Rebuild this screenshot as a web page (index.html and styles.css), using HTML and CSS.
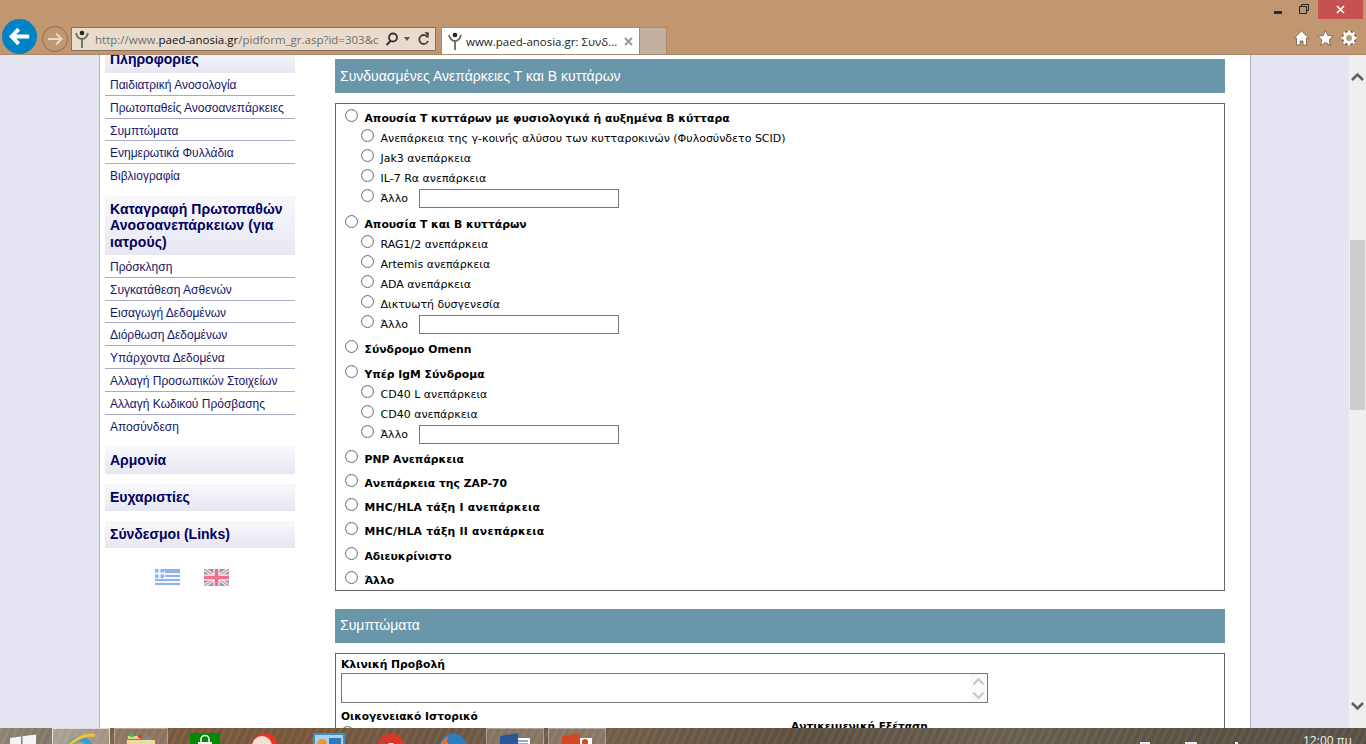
FILE: index.html
```html
<!DOCTYPE html>
<html lang="el">
<head>
<meta charset="utf-8">
<title>www.paed-anosia.gr</title>
<link rel="stylesheet" href="styles.css">
</head>
<body>
<div class="app">
  <header class="chrome">
    <div class="titlebar">
      <span class="wc-min"></span>
      <svg class="wc-restore" width="10" height="10" viewBox="0 0 10 10"><path d="M2.5 2.5V.5h7v6h-2M.5 2.5h7v7h-7z" fill="none" stroke="#222"/></svg>
      <span class="wc-close"><svg width="9" height="9" viewBox="0 0 9 9"><path d="M1 1l7 7M8 1L1 8" stroke="#fff" stroke-width="1.7"/></svg></span>
    </div>
    <div class="toolbar">
      <span class="back"><svg width="22" height="19" viewBox="0 0 25 21"><path d="M11 2L3 10.500 11 19M3.500 10.500H23" fill="none" stroke="#fff" stroke-width="4.500"/></svg></span>
      <span class="forward"><svg width="16" height="14" viewBox="0 0 16 14"><path d="M9 1.500L14.500 7 9 12.500M14 7H1" fill="none" stroke="#e8d8c4" stroke-width="2"/></svg></span>
      <div class="address">
        <svg class="favicon" width="14" height="19" viewBox="0 0 14 19"><circle cx="7" cy="3" r="2.300" fill="#222"/><path d="M1 3c1 4 3 6 6 6s5-2 6-6M7 9v9" fill="none" stroke="#6b6b5c" stroke-width="1.800"/></svg>
        <span class="url">http://www.<b>paed-anosia.gr</b>/pidform_gr.asp?id=303&amp;c</span>
        <svg class="addr-ic" width="14" height="14" viewBox="0 0 14 14"><circle cx="8" cy="5.500" r="4" fill="none" stroke="#333" stroke-width="1.800"/><path d="M5.500 9L1.500 13" stroke="#333" stroke-width="2"/></svg>
        <span class="caret"></span>
        <svg class="addr-ic" width="12" height="14" viewBox="0 0 12 14"><path d="M9.800 5.500A4.500 4.500 0 1 0 10 9" fill="none" stroke="#444" stroke-width="1.800"/><path d="M6.500 0l4.500 .5-.5 5z" fill="#444"/></svg>
      </div>
      <div class="tab">
        <svg class="favicon" width="14" height="19" viewBox="0 0 14 19"><circle cx="7" cy="3" r="2.300" fill="#222"/><path d="M1 3c1 4 3 6 6 6s5-2 6-6M7 9v9" fill="none" stroke="#6b6b5c" stroke-width="1.800"/></svg>
        <span class="tab-title">www.paed-anosia.gr: Συνδ...</span>
        <svg class="tab-x" width="9" height="9" viewBox="0 0 9 9"><path d="M1 1l7 7M8 1L1 8" stroke="#9a9a9a" stroke-width="2"/></svg>
      </div>
      <div class="newtab"></div>
      <div class="tools">
        <svg width="17" height="16" viewBox="0 0 16 16"><path d="M8 1L.8 8H3v7h3.500v-4h3v4H13V8h2.200z" fill="#fff" stroke="#6d5b48" stroke-width=".8"/></svg>
        <svg width="17" height="16" viewBox="0 0 17 16"><path d="M8.500 .5l2.300 5 5.500 .6-4.100 3.700 1.200 5.500-4.900-2.800-4.900 2.800 1.200-5.500L.7 6.100l5.500-.6z" fill="#fff" stroke="#6d5b48" stroke-width=".8"/></svg>
        <svg width="16" height="16" viewBox="0 0 16 16"><circle cx="8" cy="8" r="5.500" fill="none" stroke="#6d5b48" stroke-width="4"/><circle cx="8" cy="8" r="4.500" fill="none" stroke="#fff" stroke-width="3"/><path d="M8 .5v15M.5 8h15M2.700 2.700l10.600 10.600M13.300 2.700L2.700 13.300" stroke="#fff" stroke-width="2.600" stroke-dasharray="3 9"/></svg>
      </div>
    </div>
  </header>

  <div class="viewport">
    <div class="margin-left"></div>
    <div class="page">
      <aside class="sidebar">
        <h3 class="nav-head nav-head-clipped">Πληροφορίες</h3>
        <ul class="nav-list">
          <li>Παιδιατρική Ανοσολογία</li>
          <li>Πρωτοπαθείς Ανοσοανεπάρκειες</li>
          <li>Συμπτώματα</li>
          <li>Ενημερωτικά Φυλλάδια</li>
          <li>Βιβλιογραφία</li>
        </ul>
        <h3 class="nav-head nav-head-reg">Καταγραφή Πρωτοπαθών Ανοσοανεπάρκειων (για ιατρούς)</h3>
        <ul class="nav-list">
          <li>Πρόσκληση</li>
          <li>Συγκατάθεση Ασθενών</li>
          <li>Εισαγωγή Δεδομένων</li>
          <li>Διόρθωση Δεδομένων</li>
          <li>Υπάρχοντα Δεδομένα</li>
          <li>Αλλαγή Προσωπικών Στοιχείων</li>
          <li>Αλλαγή Κωδικού Πρόσβασης</li>
          <li>Αποσύνδεση</li>
        </ul>
        <h3 class="nav-head nav-head-one first-one">Αρμονία</h3>
        <h3 class="nav-head nav-head-one">Ευχαριστίες</h3>
        <h3 class="nav-head nav-head-one">Σύνδεσμοι (Links)</h3>
        <div class="flags">
          <svg width="25" height="17" viewBox="0 0 25 17"><rect width="25" height="17" fill="#f4f7fd"/><path d="M0 1h25M10 3h15M10 7h15M0 11h25M0 15h25" stroke="#8fb2ee" stroke-width="2"/><rect width="9" height="9" fill="#8fb2ee"/><path d="M4.500 0v9M0 4.500h9" stroke="#f4f7fd" stroke-width="2"/></svg>
          <svg width="25" height="17" viewBox="0 0 25 17"><rect width="25" height="17" fill="#8b9dbd"/><path d="M0 0l25 17M25 0L0 17" stroke="#f5f5f8" stroke-width="3.500"/><path d="M0 0l25 17M25 0L0 17" stroke="#f0788f" stroke-width="1.200"/><path d="M12.500 0v17M0 8.500h25" stroke="#f5f5f8" stroke-width="6"/><path d="M12.500 0v17M0 8.500h25" stroke="#f0708a" stroke-width="3.600"/></svg>
        </div>
      </aside>
      <main class="content">
        <h2 class="section-head">Συνδυασμένες Ανεπάρκειες Τ και Β κυττάρων</h2>
        <div class="box options">
          <label class="row top first"><span class="radio"></span>Απουσία Τ κυττάρων με φυσιολογικά ή αυξημένα Β κύτταρα</label>
          <label class="row sub"><span class="radio"></span>Ανεπάρκεια της γ-κοινής αλύσου των κυτταροκινών (Φυλοσύνδετο SCID)</label>
          <label class="row sub"><span class="radio"></span>Jak3 ανεπάρκεια</label>
          <label class="row sub"><span class="radio"></span>IL-7 Rα ανεπάρκεια</label>
          <label class="row sub"><span class="radio"></span><span class="other">Άλλο</span><span class="field"></span></label>
          <label class="row top mt6"><span class="radio"></span>Απουσία Τ και Β κυττάρων</label>
          <label class="row sub"><span class="radio"></span>RAG1/2 ανεπάρκεια</label>
          <label class="row sub"><span class="radio"></span>Artemis ανεπάρκεια</label>
          <label class="row sub"><span class="radio"></span>ADA ανεπάρκεια</label>
          <label class="row sub"><span class="radio"></span>Δικτυωτή δυσγενεσία</label>
          <label class="row sub"><span class="radio"></span><span class="other">Άλλο</span><span class="field"></span></label>
          <label class="row top mt5"><span class="radio"></span>Σύνδρομο Omenn</label>
          <label class="row top mt5"><span class="radio"></span>Υπέρ IgM Σύνδρομα</label>
          <label class="row sub"><span class="radio"></span>CD40 L ανεπάρκεια</label>
          <label class="row sub"><span class="radio"></span>CD40 ανεπάρκεια</label>
          <label class="row sub"><span class="radio"></span><span class="other">Άλλο</span><span class="field"></span></label>
          <label class="row top mt5"><span class="radio"></span>PNP Ανεπάρκεια</label>
          <label class="row top"><span class="radio"></span>Ανεπάρκεια της ZAP-70</label>
          <label class="row top wide"><span class="radio"></span>MHC/HLA τάξη I ανεπάρκεια</label>
          <label class="row top wide"><span class="radio"></span>MHC/HLA τάξη II ανεπάρκεια</label>
          <label class="row top mt5"><span class="radio"></span>Αδιευκρίνιστο</label>
          <label class="row top"><span class="radio"></span>Άλλο</label>
        </div>
        <h2 class="section-head second">Συμπτώματα</h2>
        <div class="box symptoms">
          <div class="sym-label">Κλινική Προβολή</div>
          <div class="textarea">
            <span class="ta-scroll">
              <svg width="13" height="9" viewBox="0 0 13 9"><path d="M1.500 7.500L6.500 2l5 5.500" fill="none" stroke="#c8c8c8" stroke-width="2"/></svg>
              <svg width="13" height="9" viewBox="0 0 13 9"><path d="M1.500 1.500L6.500 7l5-5.500" fill="none" stroke="#c8c8c8" stroke-width="2"/></svg>
            </span>
          </div>
          <div class="sym-cols">
            <div class="sym-left">
              <div class="sym-label sym-small">Οικογενειακό Ιστορικό</div>
              <span class="radio"></span>
            </div>
            <div class="sym-right sym-label sym-small">Αντικειμενική Εξέταση</div>
          </div>
        </div>
      </main>
    </div>
    <div class="margin-right"></div>
    <div class="scrollbar">
      <svg width="13" height="9" viewBox="0 0 13 9"><path d="M1 8L6.500 2.500 12 8" fill="none" stroke="#606060" stroke-width="2.600"/></svg>
      <div class="thumb"></div>
      <svg class="sb-down" width="13" height="9" viewBox="0 0 13 9"><path d="M1 1L6.500 6.500 12 1" fill="none" stroke="#606060" stroke-width="2.600"/></svg>
    </div>
  </div>

  <footer class="taskbar">
    <svg class="win" width="26" height="26" viewBox="0 0 26 26"><path d="M0 4l11-1.500V13H0zM12.500 2.300L26 .5V13H12.500z" fill="#f4f4f4"/></svg>
    <div class="tb-btn tb-active">
      <svg width="32" height="32" viewBox="0 0 32 32"><circle cx="15" cy="17" r="11" fill="none" stroke="#2f9be0" stroke-width="5"/><path d="M3 14C10 5 24 0 30 3" fill="none" stroke="#f2c230" stroke-width="3"/></svg>
    </div>
    <div class="tb-btn tb-folder">
      <svg width="30" height="20" viewBox="0 0 30 20"><path d="M1 7h28v13H1z" fill="#f0dc9e"/><path d="M2 3h10l2 3H2z" fill="#ead28a"/><rect x="4" y="1" width="4" height="3" fill="#38c24a"/><rect x="12" y="2" width="4" height="3" fill="#d8402c"/><rect x="20" y="4" width="4" height="3" fill="#3c9ae0"/></svg>
    </div>
    <div class="tb-icon store"><svg width="30" height="20" viewBox="0 0 30 20"><rect width="30" height="20" fill="#008a00"/><path d="M8 9h14v11H8z" fill="#fff"/><path d="M11 9V6a4 3.500 0 0 1 8 0v3" fill="none" stroke="#fff" stroke-width="1.500"/></svg></div>
    <div class="tb-icon opera"><svg width="28" height="20" viewBox="0 0 28 20"><circle cx="14" cy="14" r="13" fill="#e2352b"/><circle cx="11" cy="14" r="10" fill="#f8dfd0"/></svg></div>
    <div class="tb-icon tile"><svg width="32" height="20" viewBox="0 0 32 20"><rect width="32" height="20" fill="#3f8fc9"/><rect x="2" y="2" width="28" height="18" fill="#a8d0ec"/><rect x="16" y="5" width="12" height="15" fill="#2d7cb8"/><circle cx="9" cy="11" r="5" fill="#e69a2c"/></svg></div>
    <div class="tb-icon chrome-ic"><svg width="28" height="20" viewBox="0 0 28 20"><circle cx="14" cy="14" r="13.500" fill="#d9372b"/><path d="M.5 14a13.500 13.500 0 0 0 7 11.500L14 14z" fill="#2ea04c"/><path d="M.8 11.500L6 14l2-4z" fill="#2ea04c"/><circle cx="14" cy="16" r="6" fill="#fff"/><circle cx="14" cy="16" r="4.500" fill="#4a8be8"/></svg></div>
    <div class="tb-icon fox"><svg width="28" height="20" viewBox="0 0 28 20"><circle cx="14" cy="14" r="13.500" fill="#2c7cc0"/><path d="M0 18C1 8 6 5 10 3 6 8 9 12 14 13c-2 3-3 6 0 9H2z" fill="#e8702a"/></svg></div>
    <div class="tb-btn tb-word"><svg width="30" height="20" viewBox="0 0 30 20"><rect x="14" y="5" width="16" height="15" fill="#fff"/><path d="M18 8h10M18 11h10" stroke="#2b579a"/><path d="M0 3L18 0v20H0z" fill="#2b579a"/></svg></div>
    <div class="tb-btn tb-ppt"><svg width="30" height="20" viewBox="0 0 30 20"><rect x="14" y="5" width="16" height="15" fill="#fff"/><circle cx="23" cy="9" r="3" fill="#d24726"/><path d="M0 3L18 0v20H0z" fill="#d24726"/></svg></div>
    <div class="tray">
      <span class="tray-a"></span><span class="tray-b"></span><span class="tray-c"></span>
      <span class="clock">12:00 πμ</span>
    </div>
  </footer>
</div>
</body>
</html>
```
FILE: styles.css
```css
* { box-sizing: border-box; }
html, body { margin: 0; height: 100%; overflow: hidden; }
body { font-family: "DejaVu Sans", sans-serif; font-size: 11px; color: #000; }
.app { width: 1366px; height: 744px; display: flex; flex-direction: column; overflow: hidden; }

/* browser chrome */
.chrome { height: 55px; flex: none; background: #c09771; border-bottom: 1px solid #a78a6b; position: relative; z-index: 2; }
.titlebar { height: 19px; display: flex; justify-content: flex-end; align-items: flex-start; padding-right: 3px; }
.wc-min { width: 8px; height: 3px; background: #2a2a2a; margin: 11px 17px 0 0; }
.wc-restore { margin: 4px 9px 0 0; }
.wc-close { width: 45px; height: 19px; background: #c75050; display: flex; align-items: center; justify-content: center; }
.toolbar { height: 35px; display: flex; align-items: flex-end; padding-left: 2px; }
.back { width: 35px; height: 35px; border-radius: 50%; background: #0083c5; display: flex; align-items: center; justify-content: center; flex: none; margin-bottom: 0; }
.forward { width: 26px; height: 26px; border-radius: 50%; border: 1px solid #8a6f52; margin: 0 3px 2px 5px; display: flex; align-items: center; justify-content: center; flex: none; }
.address { width: 365px; height: 24px; background: #eadccd; border: 1px solid #8a7058; margin-bottom: 3px; display: flex; align-items: center; padding: 0 5px 0 3px; flex: none; }
.favicon { flex: none; }
.url { font-family: "Open Sans", "Liberation Sans", sans-serif; font-size: 11.5px; color: #6f6f6f; margin-left: 6px; width: 291px; white-space: nowrap; overflow: hidden; }
.url b { font-weight: 400; color: #111; }
.addr-ic { flex: none; }
.caret { width: 0; height: 0; border: 3px solid transparent; border-top: 4px solid #555; border-bottom: 0; margin: 0 8px 0 5px; flex: none; }
.tab { width: 199px; height: 27px; margin-left: 5px; background: #fff; border: 1px solid #a78a6b; border-bottom: 0; display: flex; align-items: center; padding: 0 5px 0 6px; flex: none; }
.tab-title { font-family: "Open Sans", "Liberation Sans", sans-serif; font-size: 11.5px; color: #222; margin-left: 4px; white-space: nowrap; flex: 1; }
.tab-x { flex: none; margin-right: 1px; }
.newtab { width: 27px; height: 27px; background: #c4b09f; border: 1px solid #a78a6b; border-width: 1px 1px 0 0; flex: none; }
.tools { margin-left: auto; display: flex; align-items: center; gap: 7px; height: 35px; padding: 2px 9px 0 0; }

/* page viewport */
.viewport { flex: 1; min-height: 0; display: flex; overflow: hidden; }
.margin-left { width: 100px; flex: none; background: #e5e5f1; border-right: 1px solid #b3b0cf; }
.margin-right { width: 99px; flex: none; background: #e5e5f1; border-left: 1px solid #b3b0cf; }
.page { width: 1150px; flex: none; background: #fff; display: flex; padding-left: 5px; }

/* sidebar */
.sidebar { width: 190px; flex: none; font-family: "Liberation Sans", sans-serif; color: #000066; margin-right: 40px; }
.nav-head { margin: 0; padding: 0 5px; font-size: 14px; font-weight: 700; background: linear-gradient(#f8f8fc, #e7e7f3); color: #000060; }
.nav-head-clipped { height: 28px; margin-top: -10px; padding-top: 6px; line-height: 16px; }
.nav-head-reg { height: 59px; margin-top: 9px; padding-top: 5px; line-height: 16.5px; letter-spacing: .1px; }
.nav-head-one { height: 27px; margin-top: 10px; line-height: 26px; }
.first-one { height: 28px; margin-top: 9px; line-height: 28px; }
.nav-list { list-style: none; margin: 0; padding: 0; font-size: 12px; color: #16166a; }
.nav-list li { height: 22.8px; line-height: 24px; padding-left: 5px; border-bottom: 1px solid #aaa8c8; white-space: nowrap; }
.nav-list li:last-child { border-bottom: 0; }
.flags { display: flex; gap: 24px; padding: 21px 0 0 50px; }

/* content */
.content { width: 890px; flex: none; padding-top: 4px; }
.section-head { margin: 0; height: 34px; background: #6a96aa; color: #fff; font-family: "Liberation Sans", sans-serif; font-size: 14px; font-weight: 400; line-height: 35px; padding-left: 5px; }
.second { margin-top: 18px; line-height: 32px; }
.box { border: 1px solid #666; margin-top: 10px; background: #fff; }
.options { height: 488px; padding: 4px 0 0 9px; }
.row { display: flex; align-items: center; height: 20px; white-space: nowrap; }
.top { font-weight: 700; font-size: 10.8px; margin-top: 4px; }
.wide { letter-spacing: .25px; }
.first { margin-top: 0; }
.mt5 { margin-top: 5px; }
.mt6 { margin-top: 6px; }
.sub { padding-left: 16px; }
.radio { width: 13px; height: 13px; border: 1px solid #707070; border-radius: 50%; background: #fff; flex: none; margin: 0 6.500px 5px 0; box-shadow: inset 0 0 1px #bbb; }
.other { width: 38.500px; }
.field { width: 200px; height: 19px; border: 1px solid #777; background: #fff; margin-top: 1px; }
.symptoms { height: 120px; padding: 4px 5px 0; overflow: hidden; }
.sym-label { font-weight: 700; font-size: 10.8px; line-height: 14px; }
.sym-small { font-size: 10.6px; }
.textarea { width: 647px; height: 30px; border: 1px solid #777; margin-top: 1px; display: flex; justify-content: flex-end; }
.ta-scroll { width: 17px; display: flex; flex-direction: column; align-items: center; justify-content: space-around; background: #fafafa; }
.sym-cols { display: flex; margin-top: 6px; }
.sym-left { width: 450px; }
.sym-left .radio { display: block; margin-top: 3px; }
.sym-right { margin-top: 10px; }

/* scrollbar */
.scrollbar { width: 17px; flex: none; background: #efefef; position: relative; display: flex; flex-direction: column; align-items: center; padding-top: 17px; }
.thumb { width: 15px; height: 170px; background: #cdcdcd; margin-top: 159px; }
.sb-down { margin-top: 292px; }

/* taskbar */
.taskbar { height: 16px; flex: none; display: flex; overflow: hidden; position: relative; background:
  repeating-linear-gradient(115deg, rgba(255,255,255,.035) 0 3px, rgba(0,0,0,.04) 3px 7px),
  linear-gradient(90deg, #8f8778 0, #857a69 50px, #7a5c40 130px, #7b5a3e 300px, #6f5a45 450px, #75604a 620px, #5f5242 800px, #6b6254 1000px, #5d5548 1180px, #5b5347 1366px); }
.win { position: absolute; left: 10px; top: 6px; }
.tb-btn { position: absolute; top: 0; height: 20px; background: rgba(255,255,255,.17); border: 1px solid rgba(255,255,255,.3); border-bottom: 0; display: flex; justify-content: center; padding-top: 4px; }
.tb-active { left: 52px; width: 58px; background: rgba(255,255,255,.32); border-color: rgba(255,255,255,.65); }
.tb-folder { left: 114px; width: 54px; }
.tb-word { left: 486px; width: 58px; }
.tb-ppt { left: 548px; width: 58px; }
.tb-icon { position: absolute; top: 5px; line-height: 0; }
.store { left: 190px; }
.opera { left: 251px; top: 4px; }
.tile { left: 313px; }
.chrome-ic { left: 377px; }
.fox { left: 439px; }
.tray { position: absolute; left: 0; top: 0; width: 100%; height: 16px; }
.tray-a, .tray-b, .tray-c { position: absolute; top: 14px; height: 2px; background: #eee; }
.tray-a { left: 1140px; width: 10px; }
.tray-b { left: 1185px; width: 12px; }
.tray-c { left: 1235px; width: 3px; }
.clock { position: absolute; left: 1303px; top: 5px; font-family: "Open Sans", "Liberation Sans", sans-serif; font-size: 12px; line-height: 16px; color: #f0f0f0; white-space: nowrap; }
```
